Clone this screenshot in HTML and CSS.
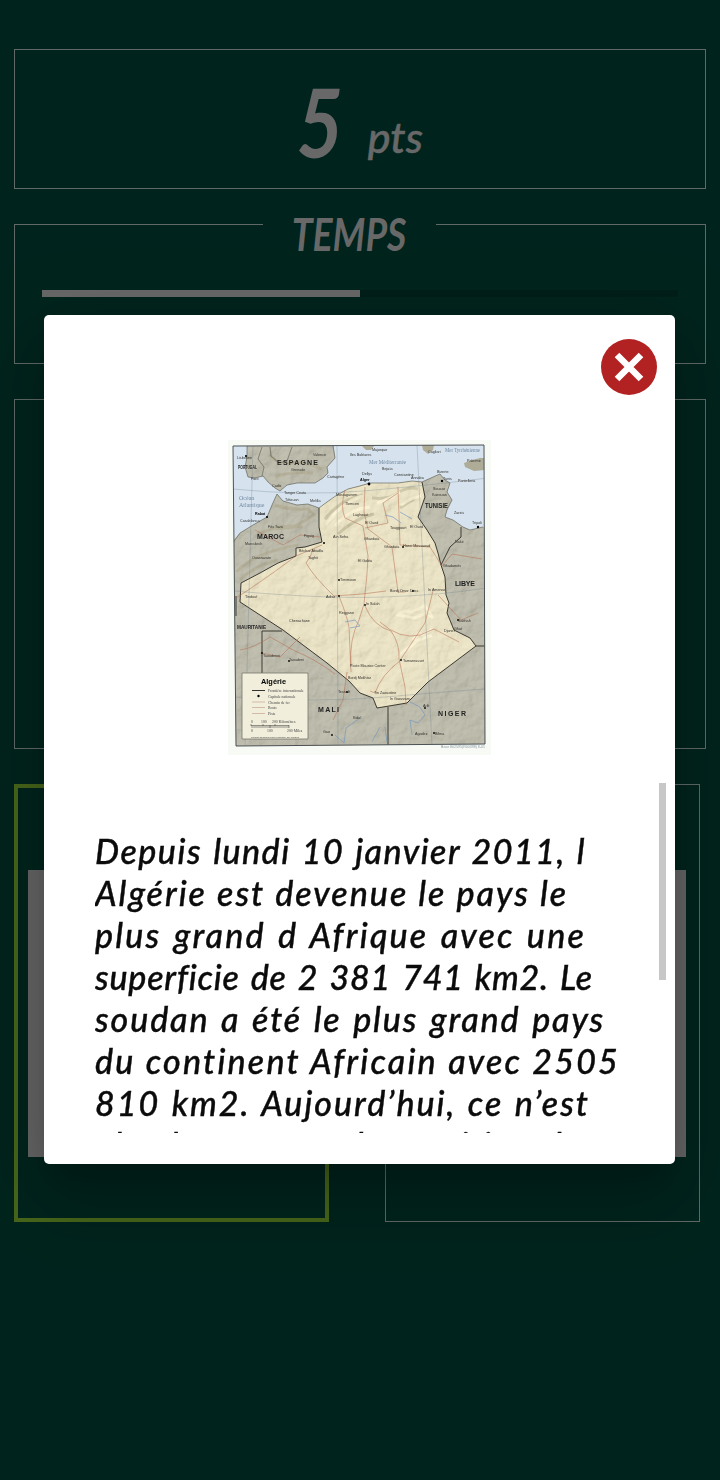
FILE: index.html
```html
<!DOCTYPE html>
<html lang="fr">
<head>
<meta charset="utf-8">
<title>Quiz</title>
<link rel="stylesheet" href="styles.css">
</head>
<body>
<main class="game">
  <section class="card score"><span class="score-value">5</span><span class="score-unit">pts</span></section>
  <section class="card timer">
    <h2 class="timer-title"><span>TEMPS</span></h2>
    <div class="timer-track"><div class="timer-fill"></div></div>
  </section>
  <section class="card question"></section>
  <section class="answers">
    <div class="answer answer-selected"><div class="answer-image"></div></div>
    <div class="answer"><div class="answer-image"></div></div>
  </section>
</main>

<div class="overlay">
  <div class="dialog" role="dialog">
    <button class="close" aria-label="Fermer">
      <svg viewBox="0 0 56 56"><circle cx="28" cy="28" r="28"/><path d="M16 16 40 40M40 16 16 40"/></svg>
    </button>
    <svg class="map" viewBox="228 440 263 315">
      <defs>
        <clipPath id="frame"><path d="M233 446 484 445 485 744 236 746Z"/></clipPath>
        <clipPath id="land"><path d="M247 440 247 457 245 467 248 477 255 478 263 476 268 482 275 488 280 491 287 485 297 483 315 483 323 478 328 473 327 467 335 458 333 440ZM277 494 272 505 267 517 253 525 240 533 230 544 230 750 490 750 490 525 483 527 470 530 463 527 453 520 445 517 447 510 452 500 447 492 450 483 445 480 440 474 433 477 422 482 412 481 398 483 385 483 370 483 360 486 348 489 337 495 327 502 319 508 308 504 297 505 283 501Z"/></clipPath>
        <filter id="relief" x="0" y="0" width="100%" height="100%">
          <feTurbulence type="fractalNoise" baseFrequency=".07" numOctaves="4" seed="4"/>
          <feDiffuseLighting surfaceScale="3" lighting-color="#fff"><feDistantLight azimuth="225" elevation="55"/></feDiffuseLighting>
        </filter>
      </defs>
      <path class="paper" d="M228 440h263v315H228z"/>
      <g clip-path="url(#frame)">
        <path class="sea" d="M230 440h260v310H230z"/>
        <path class="land" d="M247 440 247 457 245 467 248 477 255 478 263 476 268 482 275 488 280 491 287 485 297 483 315 483 323 478 328 473 327 467 335 458 333 440ZM277 494 272 505 267 517 253 525 240 533 230 544 230 750 490 750 490 525 483 527 470 530 463 527 453 520 445 517 447 510 452 500 447 492 450 483 445 480 440 474 433 477 422 482 412 481 398 483 370 483 348 489 327 502 319 508 308 504 297 505 283 501ZM422 445l12 0-1 5-5 4-5-4ZM464 463l8-3 8-2 6 0v12l-12 1-9-4ZM362 446h12l-3 4-5 0Z"/>
        <path class="hills" d="M270 455q8 10 20 8t32 6M275 477q14-6 38-4M275 505q12 5 33 4l6 6-20 12-20 2M258 535q20-12 45-8M236 572q20-20 62-27M240 580q14-14 38-20"/>
        <path class="algeria" d="M319 508 327 502 337 495 348 489 360 486 370 483 385 483 398 483 412 481 422 482 425 497 418 517 427 530 435 543 438 553 441 565 445 577 446 595 449 603 447 613 454 630 470 638 476 646 428 682 407 703 377 708 373 698 360 693 349 681 327 663 283 630 240 602 241 583 260 573 278 563 296 556 296 548 305 547 322 542 319 527Z"/>
        <path class="hills" d="M325 519q16-20 38-24M338 534q16-15 36-20M372 498q16 2 26-5t20-4M400 508l14-9"/>
        <path class="hills pale" d="M326 525q15-23 37-29M335 526q14-17 35-19M377 503q13-4 23-11M401 505q10-7 20-9M398 615q6-6 14-3l13-6 8 12-7-5-12 5ZM398 658q7-9 12-11l8-7 14-5M413 640l6-7 4 2 9-6"/>
        <g clip-path="url(#land)"><rect class="relief" x="228" y="440" width="263" height="315" filter="url(#relief)"/></g>
        <path class="border" d="M319 508 319 527 322 542 305 547 296 548 296 556 278 563 260 573 241 583 240 602 283 630 327 663 349 681 360 693 373 698 377 708 407 703 428 682 476 646 470 638 454 630 447 613 449 603 446 595 445 577 441 565 438 553 435 543 427 530 418 517 425 497 422 482M441 565 450 547 461 537 461 527M476 646h10M388 707v40M262 673V631h20M236 616v-20"/>
        <path class="coast" d="M247 446v11l-2 10 3 10 7 1 8-2 5 6 7 6 5 3 7-6 10-2h18l8-5 5-5-1-6 8-9-2-12M277 494l-5 11-5 12-14 8-13 8-8 11M277 494l6 7 14 4 11-1 11 4 8-6 10-7 11-6 12-3 10-3h28l14-2 10 1 11-5 7-3 5 6 5 3-3 9 5 8-5 10-2 7 8 3 10 7 7 3 13-3M262 447l-4 12 6 8-2 9M270 447l1 9 8 7 8-2 5-14"/>
        <path class="road" d="M345 490q-5 17 0 28l18 8 5 30-1 18-3 30-5 16q-10 20-8 45M365 487l-1 25 4 17 24 18 6 45 7 0M398 487l2 58 30 2 12 19M236 598q25-16 60-42l26-11M313 549q-2 8-7 14 8 14 28 33l28-2 24-3M339 596q8 20 10 31l2 45M365 606q8 20 26 25 9 13 8 28l6 28 1 18M401 660q-20 15-26 33l-5-2M433 591l-8 32-24 36M380 622q20 18 40 13l14-6 25 13M240 650q14-2 30-13l25 14q20 8 40 23M347 672l-4 28-10 20M442 566l10-12 30 5M438 595l23 25 17-7M262 653l18 4 20-20M255 530l28 15 17-10 20 2M398 493l-15 10 5 20-23 5"/>
        <path class="grid" d="M233 489q70 7 130 2t125-13M234 591q90 8 150 6t102-9M235 697q80 6 150 0t100-8M253 445l-8 300M337 445l1 300M417 445l15 300"/>
        <path class="rivers" d="M345 622l10-2 5 6-10 2M385 515l8 2 8 6M410 702l10 5 5 8-7 8-8-3 2 15M380 727l-8 15M385 727l2 15M335 735l9 8 2-15 14-10M400 512l12 7"/>
        <g class="places">
          <text x="237" y="459">Lisbonne</text><text x="313" y="456">Valence</text><text x="291" y="471">Grenade</text><text x="251" y="480">Faro</text><text x="327" y="478">Cartagène</text><text x="272" y="487">Cadix</text><text x="284" y="494">Tanger Ceuta</text><text x="285" y="501">Tétouan</text><text x="310" y="502">Melilla</text><text x="255" y="515" class="b">Rabat</text><text x="240" y="522">Casablanca</text><text x="268" y="528">Fès Taza</text><text x="245" y="545">Marrakech</text><text x="252" y="559">Ouarzazate</text><text x="304" y="537">Figuig</text><text x="333" y="538">Aïn Sefra</text><text x="299" y="552">Béchar Abadla</text><text x="308" y="559">Taghit</text><text x="360" y="481" class="b">Alger</text><text x="362" y="475">Dellys</text><text x="382" y="470">Bejaïa</text><text x="394" y="476">Constantine</text><text x="411" y="479">Annaba</text><text x="437" y="473">Bizerte</text><text x="443" y="480">Tunis</text><text x="433" y="490">Sousse</text><text x="432" y="496">Kairouan</text><text x="336" y="496">Mostaganem</text><text x="345" y="505">Tlemcen</text><text x="353" y="516">Laghouat</text><text x="365" y="524">El Oued</text><text x="390" y="529">Touggourt</text><text x="410" y="528">El Oued</text><text x="384" y="548">Ghardaïa</text><text x="403" y="547">Hassi Messaoud</text><text x="358" y="562">El Goléa</text><text x="364" y="540">Ghardaïa</text><text x="390" y="592">Bordj Omar Driss</text><text x="428" y="591">In Amenas</text><text x="443" y="567">Ghadamès</text><text x="454" y="514">Zarzis</text><text x="472" y="524">Tripoli</text><text x="455" y="543">Nalut</text><text x="458" y="622">Sabhah</text><text x="454" y="630">Ghat</text><text x="245" y="598">Tindouf</text><text x="289" y="622">Chenachane</text><text x="340" y="581">Timimoun</text><text x="326" y="598">Adrar</text><text x="339" y="614">Reggane</text><text x="366" y="605">In Salah</text><text x="403" y="662">Tamanrasset</text><text x="444" y="632">Djanet</text><text x="350" y="667">Poste Maurice Cortier</text><text x="348" y="679">Bordj Mokhtar</text><text x="374" y="694">Tin Zaouatine</text><text x="390" y="700">In Guezzam</text><text x="263" y="657">Taoudenni</text><text x="289" y="661">Taoudeni</text><text x="338" y="693">Tessalit</text><text x="353" y="719">Kidal</text><text x="323" y="733">Gao</text><text x="415" y="735">Agadez</text><text x="435" y="735">Bilma</text><text x="423" y="707">Arlit</text><text x="372" y="451">Majorque</text><text x="350" y="456">Iles Baléares</text><text x="428" y="453">Cagliari</text><text x="467" y="462">Palerme</text><text x="458" y="482">Pantelleria</text>
        </g>
        <g class="dots"><circle cx="246" cy="456" r="1.1"/><circle cx="267" cy="517" r="1.1"/><circle cx="369" cy="484" r="1.4"/><circle cx="442" cy="481" r="1.2"/><circle cx="478" cy="527" r="1.2"/><circle cx="324" cy="543" r="1"/><circle cx="339" cy="596" r=".9"/><circle cx="365" cy="605" r=".9"/><circle cx="413" cy="591" r=".9"/><circle cx="401" cy="660" r=".9"/><circle cx="403" cy="547" r=".9"/><circle cx="339" cy="580" r=".9"/><circle cx="347" cy="692" r=".9"/><circle cx="289" cy="661" r=".9"/><circle cx="262" cy="653" r=".9"/><circle cx="458" cy="620" r=".9"/><circle cx="425" cy="708" r=".9"/><circle cx="434" cy="733" r=".9"/><circle cx="332" cy="735" r=".9"/></g>
        <g class="water"><text x="239" y="500">Océan</text><text x="239" y="507">Atlantique</text><text x="369" y="464" textLength="37" lengthAdjust="spacingAndGlyphs">Mer Méditerranée</text><text x="445" y="452" textLength="35" lengthAdjust="spacingAndGlyphs">Mer Tyrrhénienne</text></g>
        <g class="countries">
          <text x="277" y="465" textLength="41">ESPAGNE</text><text x="238" y="469" class="small" textLength="19" lengthAdjust="spacingAndGlyphs">PORTUGAL</text><text x="257" y="539" textLength="27">MAROC</text><text x="425" y="508" textLength="23" lengthAdjust="spacingAndGlyphs">TUNISIE</text><text x="455" y="586" textLength="20">LIBYE</text><text x="237" y="629" class="small" textLength="29" lengthAdjust="spacingAndGlyphs">MAURITANIE</text><text x="318" y="712" textLength="21">MALI</text><text x="438" y="716" textLength="28">NIGER</text>
        </g>
      </g>
      <path class="frame" d="M233 446 484 445 485 744 236 746Z"/>
      <path class="legend" d="M242 673h66v66h-66z"/>
      <text class="legend-title" x="261" y="684" textLength="25" lengthAdjust="spacingAndGlyphs">Algérie</text>
      <path class="legend-lines" d="M252 690.500h13"/><circle cx="258.500" cy="696" r="1.200"/>
      <path class="legend-roads" d="M252 702h13M252 707.500h13M252 713.500h13"/>
      <g class="legend-text"><text x="268" y="692">Frontière internationale</text><text x="268" y="697.500">Capitale nationale</text><text x="268" y="703.500">Chemin de fer</text><text x="268" y="709">Route</text><text x="268" y="715">Piste</text><text x="251" y="723">0</text><text x="261" y="723">100</text><text x="272" y="723">200 Kilomètres</text><text x="251" y="732">0</text><text x="267" y="732">100</text><text x="287" y="732">200 Miles</text></g>
      <path class="legend-lines thin" d="M251 725.500h38M251 724v2M263 724v2M275 724v2M251 727h38M289 725v3M270 725v3"/>
      <text class="credit" x="251" y="738" textLength="48" lengthAdjust="spacingAndGlyphs">Lambert Conformal Conic Projection, SP 19N/36N</text>
      <text class="credit right" x="441" y="748" textLength="44" lengthAdjust="spacingAndGlyphs">Base 802595(R00398) 8-01</text>
    </svg>
    <div class="scroll-area">
      <p class="fact"><span class="l1">Depuis lundi 10 janvier 2011, l</span> <span class="l2">Algérie est devenue le pays le</span> <span class="l3">plus grand d Afrique avec une</span> <span class="l4">superficie de 2 381 741 km2. Le</span> <span class="l5">soudan a été le plus grand pays</span> <span class="l6">du continent Africain avec 2505</span> <span class="l7">810 km2. Aujourd’hui, ce n’est</span> <span class="l8">plus le cas avec la partition du</span></p>
    </div>
    <div class="thumb"></div>
  </div>
</div>
</body>
</html>
```

FILE: styles.css
```css
* { box-sizing: border-box; }
body {
  margin: 0;
  height: 1480px;
  overflow: hidden;
  background: #00241d;
  color: #686868;
  font-family: Lato, "Open Sans", sans-serif;
  font-style: italic;
}
.game { display: flex; flex-direction: column; gap: 35px; padding: 49px 14px 0; }
.card { border: 1px solid #5f6a67; height: 140px; }
.score { display: flex; justify-content: center; align-items: flex-start; gap: 20px; padding-right: 5px; }
.score-value { font-size: 96px; font-weight: 700; line-height: 142px; transform: scaleX(.84); }
.score-unit { font-size: 43px; font-weight: 500; line-height: 52px; margin-top: 61px; -webkit-text-stroke: .5px; }
.timer { display: flex; flex-direction: column; align-items: center; }
.timer-title {
  margin: -11px 21px 0 0;
  width: 173px;
  height: 41px;
  background: #00241d;
  text-align: center;
  font-size: 45px;
  font-weight: 700;
  line-height: 40px;
}
.timer-title span { display: inline-block; transform: scaleX(.83); margin: 0 -30px; }
.timer-track { width: 636px; height: 7px; margin-top: 35px; background: #001e18; }
.timer-fill { width: 50%; height: 100%; background: #686868; }
.question { height: 350px; }
.answers { display: grid; grid-template-columns: 315px 315px; gap: 56px; }
.answer { height: 438px; border: 1px solid #5f6a67; padding: 85px 13px; }
.answer-selected { border: 4px solid #47661a; padding: 82px 10px; }
.answer-image { height: 287px; background: #666; }

.overlay { position: fixed; inset: 0; padding: 315px 45px 0 44px; }
.dialog {
  position: relative;
  height: 849px;
  padding: 125px 50px 0 51px;
  background: #fff;
  border-radius: 5px;
  box-shadow: 0 19px 26px -12px rgba(0,0,0,.2), 0 42px 66px 5px rgba(0,0,0,.14), 0 16px 80px 14px rgba(0,0,0,.12);
}
.close { position: absolute; top: 23.500px; right: 18px; width: 56px; height: 56px; padding: 0; border: 0; background: none; }
.close svg { display: block; width: 56px; height: 56px; fill: #b22222; }
.close path { stroke: #fff; stroke-width: 6.500; fill: none; }
.thumb { position: absolute; top: 468px; right: 9px; width: 7px; height: 197px; background: #c7c7c7; }

.scroll-area { height: 303px; margin-top: 75px; overflow: hidden; }
.fact { margin: 0; color: #0b0b0b; font-size: 34px; font-weight: 500; line-height: 42px; -webkit-text-stroke: .4px; }
.fact span { display: block; white-space: nowrap; text-align: justify; text-align-last: justify; }
.fact .l1 { width: 491px; letter-spacing: 1.500px; }
.fact .l2 { width: 473px; letter-spacing: 2px; }
.fact .l3 { width: 491px; letter-spacing: 2.200px; }
.fact .l4 { width: 498px; letter-spacing: .8px; }
.fact .l5 { width: 510px; letter-spacing: 1.900px; }
.fact .l6 { width: 525px; letter-spacing: 2.200px; }
.fact .l7 { width: 495px; letter-spacing: 2px; }
.fact .l8 { width: 487px; letter-spacing: 1.200px; }

.map { display: block; width: 263px; height: 315px; margin-left: 133px; font-style: normal; font-family: "Liberation Sans", Arial, sans-serif; }
.map path { fill: none; }
.map .paper { fill: #f7faf5; }
.map .sea { fill: #d6e3ef; }
.map .land { fill: #aeab97; }
.map .algeria { fill: #eadfb8; }
.map .hills { stroke: #8d8559; stroke-width: 3; opacity: .4; }
.map .pale { stroke: #fff4ce; stroke-width: 3; opacity: .8; }
.map .relief { mix-blend-mode: multiply; opacity: .25; }
.map .border { stroke: #3b3a31; stroke-width: 1; }
.map .coast { stroke: #55584e; stroke-width: .6; }
.map .road { stroke: #b56d50; stroke-width: .7; opacity: .75; }
.map .grid { stroke: #718491; stroke-width: .6; opacity: .55; }
.map .rivers { stroke: #7799bd; stroke-width: .7; }
.map .frame { stroke: #4c5254; stroke-width: 1; }
.places { font-size: 3.700px; fill: #33322d; }
.places .b { font-weight: 700; fill: #000; }
.water { font: 6px "Liberation Serif", serif; fill: #7188a0; }
.countries { font-size: 7px; font-weight: 700; fill: #222; }
.countries .small { font-size: 5.500px; }
.map .legend { fill: #f1eedc; stroke: #77766a; stroke-width: .8; }
.legend-title { font-size: 7px; font-weight: 700; }
.map .legend-lines { stroke: #333; stroke-width: 1; }
.map .thin { stroke-width: .5; }
.map .legend-roads { stroke: #caa18f; stroke-width: .7; }
.legend-text { font: 3.800px "Liberation Serif", serif; fill: #444; }
.credit { font-size: 2.400px; fill: #444; }
.credit.right { font-size: 3.500px; fill: #8a9aa3; }
```
